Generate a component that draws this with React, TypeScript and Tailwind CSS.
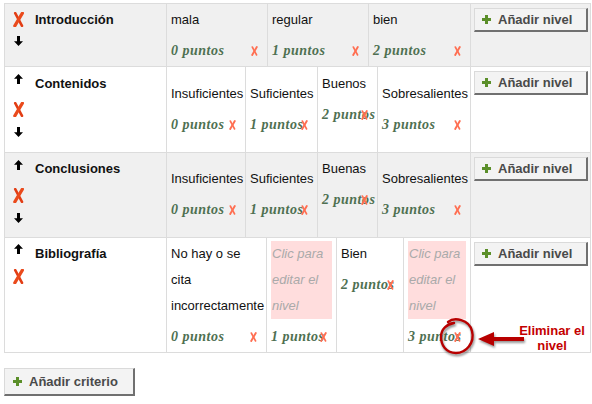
import React from "react";

const SANS = { fontFamily: '"Liberation Sans", Arial, sans-serif' };
const SERIF = { fontFamily: '"Liberation Serif", "Times New Roman", serif' };

function BigX() {
  return (
    <svg width="11" height="15" viewBox="0 0 11 15" className="block">
      <path d="M2.2 1.2 L9 13.8" stroke="#e23d14" strokeWidth="2.6" strokeLinecap="round" />
      <path d="M9.4 1.2 L1.8 13.8" stroke="#ea4a1c" strokeWidth="3.2" strokeLinecap="round" />
    </svg>
  );
}

function SmallX() {
  return (
    <svg width="7" height="10" viewBox="0 0 7 10" className="block">
      <path d="M1.3 1 L5.6 9" stroke="#ff6f52" strokeWidth="1.6" strokeLinecap="round" />
      <path d="M5.8 1 L1.2 9" stroke="#ff6f52" strokeWidth="1.9" strokeLinecap="round" />
    </svg>
  );
}

function UpArrow() {
  return (
    <svg width="9" height="10" viewBox="0 0 9 10" className="block">
      <path d="M4.5 0 L9 4.8 L6 4.8 L6 10 L3 10 L3 4.8 L0 4.8 Z" fill="#000" />
    </svg>
  );
}

function DownArrow() {
  return (
    <svg width="9" height="10" viewBox="0 0 9 10" className="block">
      <path d="M4.5 10 L9 5.2 L6 5.2 L6 0 L3 0 L3 5.2 L0 5.2 Z" fill="#000" />
    </svg>
  );
}

function Plus() {
  return (
    <svg width="9" height="9" viewBox="0 0 9 9" className="block">
      <path d="M3 0h3v3h3v3H6v3H3V6H0V3h3z" fill="#5b8f2a" />
    </svg>
  );
}

function AddLevel() {
  return (
    <div className="pl-[3px] pt-[4px]">
      <div className="flex h-[24px] w-[114px] items-center gap-[7px] border-l border-t border-b-2 border-r-2 border-l-[#dadada] border-t-[#dadada] border-b-[#707070] border-r-[#707070] bg-[#f3f3f3] pl-[7px]">
        <Plus />
        <span className="text-[13px] font-bold leading-[16px] text-[#4a4a4a]" style={SANS}>
          Añadir nivel
        </span>
      </div>
    </div>
  );
}

type Level = { name: string[]; pts: string; w: number; pt: number; pink?: boolean };

function LevelCell({ l }: { l: Level }) {
  return (
    <div className="shrink-0 border-r border-[#dcdcdc] px-[4px]" style={{ width: l.w, paddingTop: l.pt }}>
      <div className={l.pink ? "bg-[#ffdddd]" : ""}>
        {l.name.map((n, i) => (
          <div
            key={i}
            className={
              "whitespace-nowrap text-[13px] leading-[26px] " +
              (l.pink ? "italic text-[#aaaaaa] pl-[1px]" : "text-[#111]")
            }
            style={SANS}
          >
            {n}
          </div>
        ))}
      </div>
      <div className="relative mt-[5px] h-[26px]">
        <span
          className="whitespace-nowrap text-[14px] font-bold italic leading-[26px] tracking-[0.5px] text-[#4f7052]"
          style={SERIF}
        >
          {l.pts}
        </span>
        <span className="absolute right-[5px] top-[8px]">
          <SmallX />
        </span>
      </div>
    </div>
  );
}

type Row = {
  label: string;
  h: number;
  gray: boolean;
  levels: Level[];
  up: boolean;
  down: boolean;
  iconTop: number;
  xGap: number;
  labelTop: number;
};

function LeftCell({ r }: { r: Row }) {
  return (
    <div className="flex w-[162px] shrink-0 border-r border-[#dcdcdc] pl-[8px]">
      <div className="flex w-[11px] flex-col items-center" style={{ paddingTop: r.iconTop }}>
        {r.up && <UpArrow />}
        <div style={{ marginTop: r.up ? r.xGap : 0 }}>
          <BigX />
        </div>
        {r.down && (
          <div style={{ marginTop: r.up ? 10 : 9 }}>
            <DownArrow />
          </div>
        )}
      </div>
      <div
        className="ml-[11px] text-[13px] font-bold leading-[16px] text-[#111]"
        style={{ ...SANS, paddingTop: r.labelTop }}
      >
        {r.label}
      </div>
    </div>
  );
}

const rows: Row[] = [
  {
    label: "Introducción",
    h: 63,
    gray: true,
    up: false,
    down: true,
    iconTop: 8,
    xGap: 0,
    labelTop: 8,
    levels: [
      { name: ["mala"], pts: "0 puntos", w: 101, pt: 3 },
      { name: ["regular"], pts: "1 puntos", w: 101, pt: 3 },
      { name: ["bien"], pts: "2 puntos", w: 102, pt: 3 },
    ],
  },
  {
    label: "Contenidos",
    h: 86,
    gray: false,
    up: true,
    down: true,
    iconTop: 7,
    xGap: 18,
    labelTop: 9,
    levels: [
      { name: ["Insuficientes"], pts: "0 puntos", w: 79, pt: 14 },
      { name: ["Suficientes"], pts: "1 puntos", w: 72, pt: 14 },
      { name: ["Buenos"], pts: "2 puntos", w: 60, pt: 4 },
      { name: ["Sobresalientes"], pts: "3 puntos", w: 93, pt: 14 },
    ],
  },
  {
    label: "Conclusiones",
    h: 85,
    gray: true,
    up: true,
    down: true,
    iconTop: 7,
    xGap: 18,
    labelTop: 8,
    levels: [
      { name: ["Insuficientes"], pts: "0 puntos", w: 79, pt: 13 },
      { name: ["Suficientes"], pts: "1 puntos", w: 72, pt: 13 },
      { name: ["Buenas"], pts: "2 puntos", w: 60, pt: 3 },
      { name: ["Sobresalientes"], pts: "3 puntos", w: 93, pt: 13 },
    ],
  },
  {
    label: "Bibliografía",
    h: 115,
    gray: false,
    up: true,
    down: false,
    iconTop: 6,
    xGap: 15,
    labelTop: 8,
    levels: [
      { name: ["No hay o se", "cita", "incorrectamente"], pts: "0 puntos", w: 100, pt: 3 },
      { name: ["Clic para", "editar el", "nivel"], pts: "1 puntos", w: 70, pt: 3, pink: true },
      { name: ["Bien"], pts: "2 puntos", w: 67, pt: 3 },
      { name: ["Clic para", "editar el", "nivel"], pts: "3 puntos", w: 67, pt: 3, pink: true },
    ],
  },
];

export default function App() {
  return (
    <div className="relative h-[404px] w-[592px] overflow-hidden bg-white" style={SANS}>
      <div className="ml-[4px] mt-[3px] w-[587px] border-l border-r border-t border-[#dcdcdc]">
        {rows.map((r, i) => (
          <div
            key={i}
            className={"flex border-b border-[#dcdcdc] " + (r.gray ? "bg-[#f0f0f0]" : "bg-white")}
            style={{ height: r.h }}
          >
            <LeftCell r={r} />
            {r.levels.map((l, j) => (
              <LevelCell key={j} l={l} />
            ))}
            <AddLevel />
          </div>
        ))}
      </div>

      <div className="ml-[4px] mt-[15px] flex h-[28px] w-[131px] items-center gap-[7px] border-l border-t border-b-2 border-r-2 border-l-[#dadada] border-t-[#dadada] border-b-[#707070] border-r-[#707070] bg-[#f3f3f3] pl-[8px]">
        <Plus />
        <span className="text-[13px] font-bold leading-[16px] text-[#4a4a4a]">Añadir criterio</span>
      </div>

      {/* annotation overlay */}
      <svg
        className="absolute left-[438px] top-[316px] drop-shadow-[1px_2px_1px_rgba(0,0,0,0.45)]"
        width="38"
        height="40"
        viewBox="0 0 38 40"
      >
        <path
          d="M10 6 C16 1, 31 3, 34 15 C37 27, 28 37, 18 37 C8 37, 3 29, 3 21 C3 13, 9 8, 16 7"
          fill="none"
          stroke="#b80000"
          strokeWidth="2.4"
          strokeLinecap="round"
        />
      </svg>
      <svg
        className="absolute left-[476px] top-[330px] drop-shadow-[1px_2px_1px_rgba(0,0,0,0.4)]"
        width="52"
        height="20"
        viewBox="0 0 52 20"
      >
        <path d="M2 9 L18 2 L18 7 L48 7 L48 11 L18 11 L18 16 Z" fill="#b80000" />
      </svg>
      <div className="absolute left-[510px] top-[323px] w-[84px] text-center text-[13px] font-bold leading-[15px] text-[#c40000]">
        <div>Eliminar el</div>
        <div>nivel</div>
      </div>
    </div>
  );
}
